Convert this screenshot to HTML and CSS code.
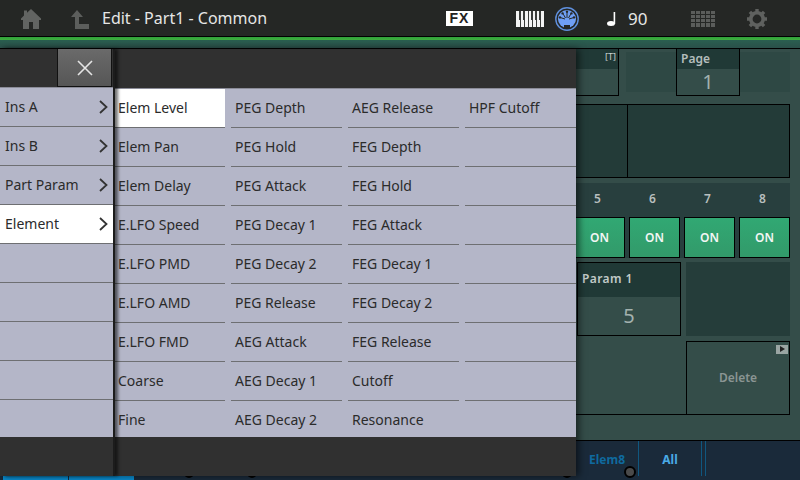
FILE: index.html
```html
<!DOCTYPE html>
<html lang="en">
<head>
<meta charset="utf-8">
<title>Edit - Part1 - Common</title>
<link rel="stylesheet" href="styles.css">
</head>
<body>
<div class="screen">
  <header class="topbar">
    <svg class="ic-home" width="20" height="20" viewBox="0 0 20 20"><path d="M10 0 20 9.5V11H18V20H12V13H8V20H2V11H0V9.5L3 6.6V1.5H6V3.8Z" fill="#626462"/></svg>
    <svg class="ic-up" width="18" height="19" viewBox="0 0 18 19"><path d="M6 0 12 7H8V14H18V19H4V7H0Z" fill="#5c5e5c"/></svg>
    <span class="title">Edit - Part1 - Common</span>
    <span class="fx">FX</span>
    <svg class="ic-keys" width="28" height="16" viewBox="0 0 28 16"><rect width="28" height="16" fill="#f4f4f4"/><g fill="#3a3c3a"><rect x="3" y="0" width="2" height="9"/><rect x="7" y="0" width="2" height="9"/><rect x="15" y="0" width="2" height="9"/><rect x="19" y="0" width="2" height="9"/><rect x="23" y="0" width="2" height="9"/></g><g fill="#3a3c3a"><rect x="4" y="9" width="1" height="7"/><rect x="8" y="9" width="1" height="7"/><rect x="12" y="0" width="1" height="16"/><rect x="16" y="9" width="1" height="7"/><rect x="20" y="9" width="1" height="7"/><rect x="24" y="9" width="1" height="7"/></g></svg>
    <svg class="ic-midi" width="24" height="24" viewBox="0 0 24 24"><circle cx="12" cy="12" r="11.2" fill="#252725" stroke="#5f8fdc" stroke-width="1.4"/><circle cx="12" cy="12" r="9" fill="#6f9ff5"/><g fill="#252725"><circle cx="12" cy="4.8" r="1.2"/><circle cx="7.6" cy="6.4" r="1.2"/><circle cx="16.4" cy="6.4" r="1.2"/><circle cx="5" cy="10.4" r="1.2"/><circle cx="19" cy="10.4" r="1.2"/><rect x="9" y="18" width="6" height="3"/></g><g stroke="#252725" stroke-width="1"><path d="M12 6V11M8.3 7.2 10.5 11M15.7 7.2 13.5 11M6 10.8 10 12M18 10.8 14 12"/></g></svg>
    <svg class="ic-note" width="9" height="14" viewBox="0 0 9 14"><rect x="6.6" y="0" width="1.6" height="12" fill="#fff"/><ellipse cx="4" cy="11.5" rx="4" ry="2.5" fill="#fff"/></svg>
    <span class="tempo">90</span>
    <svg class="ic-grid" width="24" height="16" viewBox="0 0 24 16"><g fill="#5b5d5b"><rect width="24" height="3"/><rect y="4" width="24" height="3"/><rect y="8" width="24" height="3"/><rect y="12" width="24" height="4"/></g><g fill="#252725"><rect x="4" width="1" height="16"/><rect x="9" width="1" height="16"/><rect x="14" width="1" height="16"/><rect x="19" width="1" height="16"/></g></svg>
    <svg class="ic-gear" width="20" height="20" viewBox="0 0 20 20"><circle cx="10" cy="10" r="6.2" fill="none" stroke="#5f615f" stroke-width="3.6"/><g stroke="#5f615f" stroke-width="3.4"><path d="M10 0V3M10 17V20M0 10H3M17 10H20M2.9 2.9 5 5M15 15 17.1 17.1M2.9 17.1 5 15M15 5 17.1 2.9"/></g></svg>
  </header>
  <div class="greenline"></div>

  <main class="content">
    <section class="row row-top">
      <div class="tbox"><div class="tbox-head">[T]</div></div>
      <div class="pagepanel">
        <div class="pagebox">
          <div class="pagebox-head">Page</div>
          <div class="pagebox-val">1</div>
        </div>
      </div>
    </section>
    <section class="row row-dark">
      <div class="darkcell"></div>
      <div class="darkcell darkcell-right"></div>
    </section>
    <section class="switches">
      <div class="nums"><span>5</span><span>6</span><span>7</span><span>8</span></div>
      <div class="ons">
        <button class="on">ON</button><button class="on">ON</button><button class="on">ON</button><button class="on">ON</button>
      </div>
    </section>
    <section class="row row-param">
      <div class="param">
        <div class="param-head">Param 1</div>
        <div class="param-val">5</div>
      </div>
      <div class="emptypanel"></div>
    </section>
    <section class="row row-delete">
      <div class="deleteleft"></div>
      <div class="delete"><span class="play"></span>Delete</div>
    </section>
  </main>

  <nav class="tabs">
    <div class="bluetabs"><span></span><span></span></div>
    <span class="tab tab-elem">Elem8</span>
    <span class="tab tab-all">All</span>
    <span class="tab-end"></span>
    <span class="knob"></span>
    <span class="dot dot1"></span><span class="dot dot2"></span><span class="dot dot3"></span>
  </nav>

  <aside class="menu">
    <div class="cats">
      <div class="cats-head">
        <button class="close" aria-label="Close"><svg width="16" height="16" viewBox="0 0 16 16"><path d="M1 1 15 15M15 1 1 15" stroke="#e4e4e4" stroke-width="1.6"/></svg></button>
      </div>
      <ul class="catlist">
        <li class="cat">Ins A<svg class="chev" width="9" height="14" viewBox="0 0 9 14"><path d="M1 1 7.5 7 1 13" fill="none" stroke="#333" stroke-width="1.8"/></svg></li>
        <li class="cat">Ins B<svg class="chev" width="9" height="14" viewBox="0 0 9 14"><path d="M1 1 7.5 7 1 13" fill="none" stroke="#333" stroke-width="1.8"/></svg></li>
        <li class="cat">Part Param<svg class="chev" width="9" height="14" viewBox="0 0 9 14"><path d="M1 1 7.5 7 1 13" fill="none" stroke="#333" stroke-width="1.8"/></svg></li>
        <li class="cat sel">Element<svg class="chev" width="9" height="14" viewBox="0 0 9 14"><path d="M1 1 7.5 7 1 13" fill="none" stroke="#333" stroke-width="1.8"/></svg></li>
        <li class="cat"></li><li class="cat"></li><li class="cat"></li><li class="cat"></li><li class="cat"></li>
      </ul>
    </div>
    <div class="params">
      <div class="params-head"></div>
      <ul class="paramgrid">
        <li class="sel">Elem Level</li><li>Elem Pan</li><li>Elem Delay</li><li>E.LFO Speed</li><li>E.LFO PMD</li><li>E.LFO AMD</li><li>E.LFO FMD</li><li>Coarse</li><li>Fine</li>
        <li>PEG Depth</li><li>PEG Hold</li><li>PEG Attack</li><li>PEG Decay 1</li><li>PEG Decay 2</li><li>PEG Release</li><li>AEG Attack</li><li>AEG Decay 1</li><li>AEG Decay 2</li>
        <li>AEG Release</li><li>FEG Depth</li><li>FEG Hold</li><li>FEG Attack</li><li>FEG Decay 1</li><li>FEG Decay 2</li><li>FEG Release</li><li>Cutoff</li><li>Resonance</li>
        <li>HPF Cutoff</li><li></li><li></li><li></li><li></li><li></li><li></li><li></li><li></li>
      </ul>
    </div>
  </aside>
</div>
</body>
</html>
```
FILE: styles.css
```css
* { box-sizing: border-box; }
html, body { margin: 0; padding: 0; background: #000; }
ul { list-style: none; margin: 0; padding: 0; }
button { font: inherit; margin: 0; padding: 0; }

.screen {
  position: relative;
  width: 800px;
  height: 480px;
  overflow: hidden;
  display: flex;
  flex-direction: column;
  background: #344d49;
  font-family: "Noto Sans", "Open Sans", sans-serif;
}

/* top bar */
.topbar {
  height: 37px;
  flex: none;
  display: flex;
  align-items: center;
  background: #252725;
  border-bottom: 1px solid #000;
  padding-left: 21px;
  color: #e6e6e6;
}
.ic-home { flex: none; margin-top: 2px; }
.ic-up { flex: none; margin-left: 30px; margin-top: 3px; }
.title { width: 344px; margin-left: 13px; font-size: 16px; white-space: nowrap; }
.fx {
  width: 27px; height: 15px; margin-top: 1px;
  background: #fff; color: #222;
  font: bold 14px/15px "Liberation Sans", sans-serif;
  letter-spacing: 1px;
  text-align: center;
}
.ic-keys { flex: none; margin-left: 43px; margin-top: 1px; }
.ic-midi { flex: none; margin-left: 11px; margin-top: 2px; }
.ic-note { flex: none; margin-left: 28px; margin-top: 2px; }
.tempo { width: 22px; margin-left: 12px; font-size: 17px; }
.ic-grid { flex: none; margin-left: 41px; margin-top: 1px; }
.ic-gear { flex: none; margin-left: 32px; margin-top: 2px; }

.greenline {
  height: 12px;
  flex: none;
  background: linear-gradient(#2f9f3a 0, #3fae3f 25%, #2a5f50 26%, #2a5049 100%);
  border-bottom: 1px solid #000;
}

/* underlying screen */
.content {
  flex: 1;
  padding-left: 500px;
  padding-right: 10px;
  display: flex;
  flex-direction: column;
}
.row { display: flex; }
.row-top { height: 47px; }
.tbox { width: 119px; height: 47px; border-right: 1px solid #000; border-bottom: 1px solid #000; }
.tbox-head {
  height: 20px;
  background: #203936;
  color: #c8d0ce;
  font-size: 9px;
  line-height: 16px;
  text-align: right;
  padding-right: 2px;
}
.pagepanel {
  margin-left: 7px;
  flex: 1;
  height: 40px;
  margin-top: 3px;
  background: #2e4844;
  display: flex;
  justify-content: center;
}
.pagebox {
  width: 64px;
  height: 47px;
  margin-top: -3px;
  border: 1px solid #000;
  border-top: 0;
  background: #344d49;
}
.pagebox-head {
  height: 20px;
  background: #203936;
  color: #b4bebc;
  font-size: 12px;
  font-weight: 600;
  line-height: 20px;
  padding-left: 4px;
}
.pagebox-val { text-align: center; font-size: 20px; line-height: 26px; color: #a3b1ae; }

.row-dark {
  height: 74px;
  margin-top: 8px;
  border: 1px solid #000;
  background: #233b38;
}
.darkcell { width: 126px; height: 100%; }
.darkcell-right { flex: 1; border-left: 1px solid #000; }

.switches { margin-top: 5px; height: 75px; background: #283f3e; }
.nums { height: 34px; display: grid; grid-template-columns: repeat(4, 51px); column-gap: 4px; margin-left: 72px; }
.nums span { color: #b8bfbe; font-size: 12px; font-weight: 600; line-height: 32px; text-align: center; }
.ons { display: grid; grid-template-columns: repeat(4, 51px); column-gap: 4px; margin-left: 74px; }
.on {
  height: 41px;
  border: 1px solid #000;
  background: linear-gradient(#31a873, #329a6a);
  color: #f2f6f4;
  font-family: inherit;
  font-size: 12px;
  font-weight: 600;
  text-align: center;
}

.row-param { height: 74px; margin-top: 4px; }
.param { width: 104px; margin-left: 77px; height: 74px; border: 1px solid #000; background: #344d49; }
.param-head {
  height: 34px;
  background: #203936;
  color: #c2cac8;
  font-size: 12px;
  font-weight: 600;
  letter-spacing: .4px;
  line-height: 32px;
  padding-left: 4px;
}
.param-val { text-align: center; font-size: 20px; line-height: 38px; color: #a3b1ae; }
.emptypanel { width: 104px; margin-left: 5px; background: #253d3a; }

.row-delete { height: 74px; margin-top: 5px; }
.deleteleft { width: 186px; height: 74px; border-bottom: 1px solid #000; }
.delete {
  position: relative;
  width: 104px;
  height: 74px;
  border: 1px solid #000;
  color: #8a9593;
  font-size: 12px;
  font-weight: 600;
  text-align: center;
  line-height: 71px;
}
.play { position: absolute; top: 3px; right: 1px; width: 12px; height: 9px; background: #9aa5a3; }
.play::after {
  content: "";
  position: absolute;
  left: 4px; top: 1px;
  border-left: 5px solid #222;
  border-top: 3.5px solid transparent;
  border-bottom: 3.5px solid transparent;
}

/* bottom tabs */
.tabs {
  position: relative;
  flex: none;
  height: 40px;
  background: #1a2a3a;
  border-top: 1px solid #000;
  display: flex;
  padding-left: 576px;
  font-size: 12px;
  font-weight: 700;
}
.tab { width: 63px; height: 35px; line-height: 37px; text-align: center; border-right: 1px solid #10577f; }
.tab-elem { color: #0f6a9f; }
.tab-all { color: #4aaae6; }
.tab-end { width: 4px; height: 35px; border-right: 1px solid #10577f; }
.bluetabs { position: absolute; left: 3px; bottom: 0; display: flex; gap: 1px; height: 4px; }
.bluetabs span { width: 65px; background: #0a8ccf; }
.knob {
  position: absolute; left: 624px; top: 25px;
  width: 12px; height: 12px; border-radius: 50%;
  background: #4a4a4a; border: 2px solid #000;
}
.dot { position: absolute; top: 27px; width: 10px; height: 10px; border-radius: 50%; background: #000; }
.dot1 { left: 184px; } .dot2 { left: 247px; } .dot3 { left: 562px; }

/* popup menu */
.menu {
  position: absolute;
  left: 0; top: 49px;
  width: 576px; height: 427px;
  display: flex;
  background: #303030;
  box-shadow: 3px 0 7px rgba(0,0,0,.55);
  font-size: 14px;
  color: #2b2b2b;
}
.cats {
  position: relative;
  z-index: 2;
  flex: none;
  width: 113px;
  background: #303030;
  box-shadow: 2px 0 0 #1c1c1c, 5px 0 3px rgba(0,0,0,.55);
}
.cats-head { height: 38px; display: flex; justify-content: flex-end; padding-right: 1px; }
.close {
  width: 55px; height: 38px;
  background: linear-gradient(#6a6a6a, #565656);
  border: 1px solid #111;
  border-top: 0;
  display: flex; align-items: center; justify-content: center;
}
.catlist {
  height: 350px;
  overflow: hidden;
  background: #b4b6c8;
  border-top: 1px solid #8b8c98;
}
.cat {
  height: 39px;
  line-height: 36px;
  padding-left: 5px;
  padding-right: 5px;
  display: flex;
  justify-content: space-between;
  align-items: center;
  border-bottom: 1px solid #6e6f72;
}
.cat.sel { background: #fff; }
.chev { flex: none; }
.params { flex: 1; }
.params-head { height: 39px; }
.paramgrid {
  height: 349px;
  overflow: hidden;
  background: #b4b6c8;
  border-top: 1px solid #8b8c98;
  padding-left: 1px;
  display: grid;
  grid-template-rows: repeat(9, 39px);
  grid-template-columns: repeat(4, 111px);
  grid-auto-flow: column;
  column-gap: 6px;
}
.paramgrid li {
  height: 39px;
  line-height: 37px;
  padding-left: 4px;
  border-bottom: 1px solid #6e6f72;
  white-space: nowrap;
}
.paramgrid li.sel { background: #fff; }
```
